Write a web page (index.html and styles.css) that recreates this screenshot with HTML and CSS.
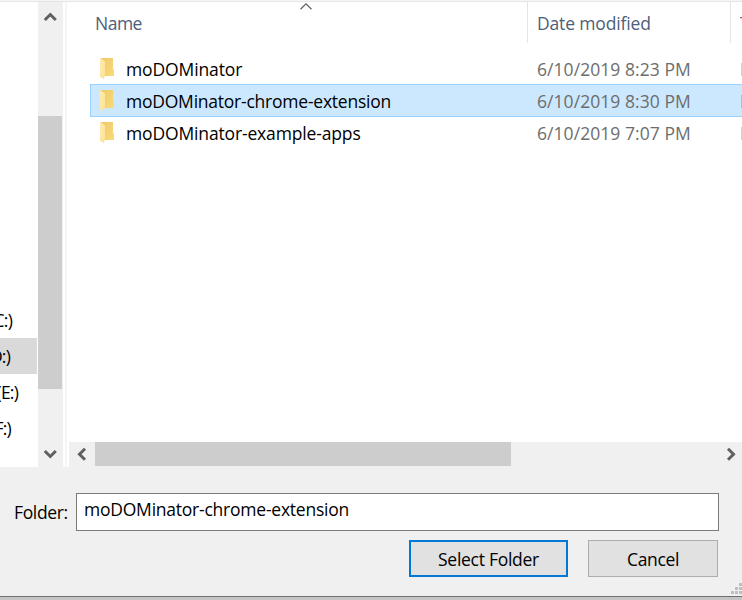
FILE: index.html
```html
<!DOCTYPE html>
<html lang="en">
<head>
<meta charset="utf-8">
<title>Select Folder</title>
<link rel="stylesheet" href="styles.css">
</head>
<body>
<svg class="defs" width="0" height="0" aria-hidden="true">
  <defs>
    <linearGradient id="back" x1="0" y1="0" x2="1" y2="1"><stop offset="0" stop-color="#edc968"/><stop offset="1" stop-color="#fbdc7c"/></linearGradient>
    <linearGradient id="front" x1="0" y1="0" x2="1" y2="1"><stop offset="0" stop-color="#ffecb0"/><stop offset="1" stop-color="#fbe196"/></linearGradient>
    <symbol id="folder" viewBox="0 0 15 22">
      <path d="M1 0H13V11L14 12V18H4V20L1 18Z" fill="url(#back)"/>
      <path d="M0 0.3L5 3V18.5L4 19V21L0 19Z" fill="url(#front)"/>
    </symbol>
  </defs>
</svg>
<div class="dialog">
  <div class="topbar"></div>
  <div class="browser">
    <nav class="sidebar">
      <div class="drive drive-c"><span>(C:)</span></div>
      <div class="drive drive-d selected"><span>(D:)</span></div>
      <div class="drive drive-e"><span>(E:)</span></div>
      <div class="drive drive-f"><span>(F:)</span></div>
    </nav>
    <div class="vscroll">
      <div class="vbutton"><svg width="12" height="10" viewBox="0 0 12 10"><path d="M0.8 8L6.3 2.5L11.8 8"/></svg></div>
      <div class="vthumb"></div>
      <div class="vbutton down"><svg width="12" height="10" viewBox="0 0 12 10"><path d="M0.8 2L6.3 7.5L11.8 2"/></svg></div>
    </div>
    <div class="splitter"></div>
    <main class="files">
      <div class="header">
        <div class="head name"><span>Name</span><svg class="sort" width="12" height="7" viewBox="0 0 12 7"><path d="M0.5 6.2L6 0.8L11.5 6.2"/></svg></div>
        <div class="head date"><span>Date modified</span></div>
        <div class="head type"><span>Type</span></div>
      </div>
      <div class="list">
        <div class="row"><svg class="folder"><use href="#folder"/></svg><span class="file f1">moDOMinator</span><span class="time">6/10/2019 8:23 PM</span><span class="kind">File folder</span></div>
        <div class="row selected"><svg class="folder"><use href="#folder"/></svg><span class="file f2">moDOMinator-chrome-extension</span><span class="time">6/10/2019 8:30 PM</span><span class="kind">File folder</span></div>
        <div class="row"><svg class="folder"><use href="#folder"/></svg><span class="file f3">moDOMinator-example-apps</span><span class="time">6/10/2019 7:07 PM</span><span class="kind">File folder</span></div>
      </div>
      <div class="hscroll">
        <div class="hbutton"><svg width="10" height="12" viewBox="0 0 10 12"><path d="M8 0.8L2.5 6.3L8 11.8"/></svg></div>
        <div class="hthumb"></div>
        <div class="hbutton right"><svg width="10" height="12" viewBox="0 0 10 12"><path d="M2 0.8L7.5 6.3L2 11.8"/></svg></div>
      </div>
    </main>
  </div>
  <footer class="footer">
    <div class="field"><span class="label">Folder:</span><div class="input"><span>moDOMinator-chrome-extension</span></div></div>
    <div class="actions"><button class="primary"><span>Select Folder</span></button><button class="cancel"><span>Cancel</span></button></div>
    <svg class="grip" width="11" height="11" viewBox="0 0 11 11"><path d="M8 0h3v3h-3zM4 4h3v3h-3zM8 4h3v3h-3zM0 8h3v3h-3zM4 8h3v3h-3zM8 8h3v3h-3z"/></svg>
  </footer>
  <div class="edge"></div>
</div>
</body>
</html>
```
FILE: styles.css
```css
* { box-sizing: border-box; }
body { margin: 0; background: #fff; overflow: hidden; }
.defs { position: absolute; }
.dialog {
  display: flex; flex-direction: column; width: 742px; height: 600px; overflow: hidden;
  font: 17.5px/24px "Open Sans", "Noto Sans", sans-serif; letter-spacing: -0.35px; color: #000; white-space: nowrap;
}
.topbar { height: 2px; background: #f5f5f5; border-bottom: 1px solid #e5e5e5; }
.browser { display: flex; height: 465px; }
.sidebar { width: 38px; padding: 300px 1px 0 0; overflow: hidden; }
.drive { height: 36px; display: flex; justify-content: flex-end; align-items: center; overflow: hidden; letter-spacing: -0.8px; }
.drive.selected { background: #d9d9d9; }
.drive-c { padding-right: 25px; }
.drive-d { padding-right: 27px; }
.drive-e { padding-right: 19px; }
.drive-f { padding-right: 26px; }
.vscroll { width: 25px; background: #f0f0f0; display: flex; flex-direction: column; }
.vbutton { height: 114px; padding: 10px 0 0 6px; line-height: 0; }
.vbutton svg, .hbutton svg { overflow: visible; }
.vbutton.down { height: 78px; padding-top: 60px; }
.vbutton path, .hbutton path { fill: none; stroke: #606060; stroke-width: 3; }
.vthumb { width: 24px; height: 273px; background: #cdcdcd; }
.splitter { width: 4px; border-left: 2px solid #fff; background: #f5f5f5; }
.files { width: 675px; display: flex; flex-direction: column; }
.header { display: flex; height: 41px; color: #4c607a; }
.head { padding: 9px 0 0 9px; overflow: hidden; }
.head.name { width: 461px; padding-left: 28px; border-right: 1px solid #e5e5e5; display: flex; letter-spacing: -0.5px; }
.head.name span { width: 205px; }
.sort { margin-top: -8px; overflow: visible; }
.sort path { fill: none; stroke: #606060; stroke-width: 1.2; }
.head.date { width: 203px; border-right: 1px solid #e5e5e5; letter-spacing: -0.15px; }
.head.type { width: 11px; }
.list { height: 399px; padding: 9px 0 0 23px; }
.row { height: 32px; display: flex; padding-left: 10px; overflow: hidden; }
.row > span { margin-top: 5px; height: 25px; }
.row.selected { height: 33px; margin-bottom: -1px; background: #cce8ff; border: 1px solid #99d1ff; border-right: 0; padding-left: 9px; }
.row.selected > span { margin-top: 4px; }
.folder { width: 15px; height: 22px; margin-top: 6px; flex: none; }
.row.selected .folder { margin-top: 5px; }
.file { width: 411px; margin-left: 11px; flex: none; }
.f1 { letter-spacing: -0.12px; }
.f2 { letter-spacing: -0.23px; }
.f3 { letter-spacing: -0.15px; }
.time { width: 203px; color: #6d6d6d; flex: none; letter-spacing: 0.06px; }
.kind { color: #6d6d6d; }
.hscroll { height: 25px; margin-left: 2px; background: #f0f0f0; display: flex; }
.hbutton { width: 26px; padding: 6px 0 0 8px; line-height: 0; }
.hbutton.right { flex: 1; padding-left: 215px; }
.hthumb { width: 416px; height: 24px; background: #cdcdcd; }
.footer { position: relative; height: 129px; background: #f0f0f0; padding-top: 26px; }
.field { display: flex; }
.label { width: 76px; padding: 7px 0 0 14px; }
.input { width: 643px; height: 38px; border: 1px solid #7a7a7a; background: #fff; padding: 3px 7px; letter-spacing: -0.23px; }
.actions { display: flex; gap: 20px; padding: 9px 0 0 409px; }
button { height: 37px; padding: 0; background: #e1e1e1; border: 1px solid #adadad; border-radius: 0; font: inherit; letter-spacing: inherit; color: #000; }
.primary { width: 159px; border: 2px solid #0078d7; letter-spacing: -0.27px; }
.cancel { width: 130px; }
.grip { position: absolute; right: 0; bottom: 2px; fill: #bfbfbf; }
.edge { height: 4px; background: #c4c4c4; border-top: 1px solid #707070; }
```
